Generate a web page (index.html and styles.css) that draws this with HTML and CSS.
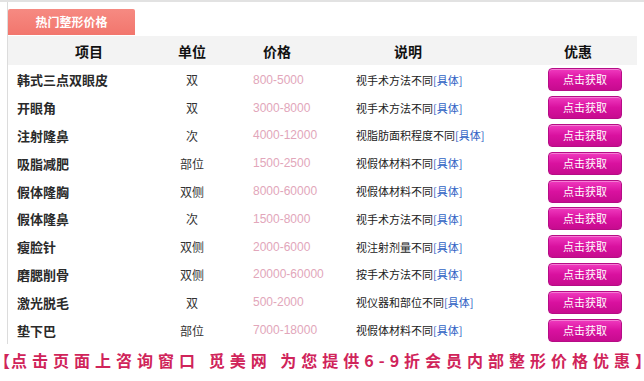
FILE: index.html
```html
<!DOCTYPE html>
<html lang="zh">
<head>
<meta charset="utf-8">
<title>热门整形价格</title>
<link rel="stylesheet" href="styles.css">
</head>
<body>
<div class="page">
  <div class="panel">
    <div class="tab">热门整形价格</div>
    <div class="table">
      <div class="row head">
        <div class="h1">项目</div>
        <div class="h2">单位</div>
        <div class="h3">价格</div>
        <div class="h4">说明</div>
        <div class="h5">优惠</div>
      </div>
      <div class="row">
        <div class="c1">韩式三点双眼皮</div><div class="c2">双</div><div class="c3">800-5000</div>
        <div class="c4">视手术方法不同<a class="more">[具体]</a></div><div class="c5"><span class="btn">点击获取</span></div>
      </div>
      <div class="row">
        <div class="c1">开眼角</div><div class="c2">双</div><div class="c3">3000-8000</div>
        <div class="c4">视手术方法不同<a class="more">[具体]</a></div><div class="c5"><span class="btn">点击获取</span></div>
      </div>
      <div class="row">
        <div class="c1">注射隆鼻</div><div class="c2">次</div><div class="c3">4000-12000</div>
        <div class="c4">视脂肪面积程度不同<a class="more">[具体]</a></div><div class="c5"><span class="btn">点击获取</span></div>
      </div>
      <div class="row">
        <div class="c1">吸脂减肥</div><div class="c2">部位</div><div class="c3">1500-2500</div>
        <div class="c4">视假体材料不同<a class="more">[具体]</a></div><div class="c5"><span class="btn">点击获取</span></div>
      </div>
      <div class="row">
        <div class="c1">假体隆胸</div><div class="c2">双侧</div><div class="c3">8000-60000</div>
        <div class="c4">视假体材料不同<a class="more">[具体]</a></div><div class="c5"><span class="btn">点击获取</span></div>
      </div>
      <div class="row">
        <div class="c1">假体隆鼻</div><div class="c2">次</div><div class="c3">1500-8000</div>
        <div class="c4">视手术方法不同<a class="more">[具体]</a></div><div class="c5"><span class="btn">点击获取</span></div>
      </div>
      <div class="row">
        <div class="c1">瘦脸针</div><div class="c2">双侧</div><div class="c3">2000-6000</div>
        <div class="c4">视注射剂量不同<a class="more">[具体]</a></div><div class="c5"><span class="btn">点击获取</span></div>
      </div>
      <div class="row">
        <div class="c1">磨腮削骨</div><div class="c2">双侧</div><div class="c3">20000-60000</div>
        <div class="c4">按手术方法不同<a class="more">[具体]</a></div><div class="c5"><span class="btn">点击获取</span></div>
      </div>
      <div class="row">
        <div class="c1">激光脱毛</div><div class="c2">双</div><div class="c3">500-2000</div>
        <div class="c4">视仪器和部位不同<a class="more">[具体]</a></div><div class="c5"><span class="btn">点击获取</span></div>
      </div>
      <div class="row">
        <div class="c1">垫下巴</div><div class="c2">部位</div><div class="c3">7000-18000</div>
        <div class="c4">视假体材料不同<a class="more">[具体]</a></div><div class="c5"><span class="btn">点击获取</span></div>
      </div>
    </div>
  </div>
  <p class="note"><span class="br">【</span><span class="txt">点击页面上咨询窗口 觅美网 为您提供6-9折会员内部整形价格优惠</span><span class="br">】</span></p>
</div>
</body>
</html>
```

FILE: styles.css
```css
html, body {
  margin: 0;
  padding: 0;
  background: #ffffff;
}
body {
  font-family: "Noto Sans CJK SC", "Liberation Sans", sans-serif;
  color: #222;
  width: 644px;
  height: 381px;
  overflow: hidden;
}
.page {
  border-top: 2px solid #e2e2e2;
  height: 379px;
}
.panel {
  margin-left: 7px;
  width: 629px;
  border-left: 1px solid #dcdcdc;
  padding-top: 7px;
}
.tab {
  width: 127px;
  height: 26px;
  line-height: 26px;
  background: linear-gradient(#f68a82, #f2766d);
  color: #fff;
  font-size: 12px;
  font-weight: 700;
  text-align: center;
  border-radius: 2px 2px 0 0;
}
.table {
  display: flex;
  flex-direction: column;
}
.row {
  display: grid;
  grid-template-columns: 162px 44px 126px 136px 160px;
  height: 27.8px;
  align-items: center;
}
.row.head {
  height: 29px;
  margin-top: 1px;
  margin-bottom: 1px;
  background: #f3f3f3;
}
.h1, .h2, .h3, .h4, .h5 {
  text-align: center;
  font-size: 14px;
  font-weight: 700;
  color: #111;
  white-space: nowrap;
}
.h5 {
  padding-left: 44px;
}
.c1 {
  padding-left: 9px;
  font-size: 13px;
  font-weight: 700;
  color: #2a2a2a;
  white-space: nowrap;
}
.c2 {
  text-align: center;
  font-size: 12px;
  color: #333;
}
.c3 {
  padding-left: 39px;
  font-family: "Liberation Sans", sans-serif;
  font-size: 12px;
  color: #e2a6ba;
  white-space: nowrap;
}
.c4 {
  padding-left: 16px;
  font-size: 11px;
  color: #222;
  white-space: nowrap;
}
.more {
  color: #2f62c4;
}
.c5 {
  display: flex;
  padding-left: 72px;
}
.btn {
  display: block;
  width: 72px;
  height: 21px;
  line-height: 21px;
  border: 1px solid #b60c86;
  border-radius: 4px;
  background: linear-gradient(#f03abf, #d9119f 50%, #c70b8f);
  color: #fff;
  font-size: 11px;
  text-align: center;
  box-shadow: inset 0 1px 0 rgba(255,255,255,0.35);
}
.note {
  margin: 0;
  padding-left: 2px;
  padding-top: 5px;
  font-size: 16px;
  line-height: 22px;
  font-weight: 700;
  color: #d0245a;
  white-space: nowrap;
}
.br {
  font-feature-settings: "halt" 1;
}
.txt {
  letter-spacing: 5px;
  margin-left: 1px;
}
```
